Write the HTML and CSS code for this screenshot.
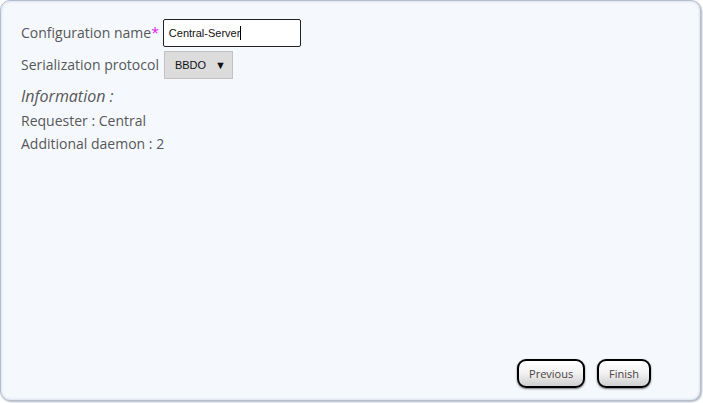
FILE: index.html
```html
<!DOCTYPE html>
<html>
<head>
<meta charset="utf-8">
<link rel="stylesheet" href="styles.css">
</head>
<body>
<div class="panel">
  <div class="form">
    <div class="row">
      <span class="label">Configuration name<span class="req">*</span></span>
      <div class="textbox" role="textbox"><span class="val">Central-Server</span><span class="caret"></span></div>
    </div>
    <div class="row">
      <span class="label">Serialization protocol</span>
      <div class="select" role="listbox"><span class="opt">BBDO</span><span class="arrow">▼</span></div>
    </div>
    <div class="info-title">Information :</div>
    <div class="info-line">Requester : Central</div>
    <div class="info-line">Additional daemon : 2</div>
  </div>
  <div class="actions">
    <button class="btn btn-prev">Previous</button>
    <button class="btn">Finish</button>
  </div>
</div>
</body>
</html>
```
FILE: styles.css
```css
html, body {
  margin: 0;
  padding: 0;
  background: #ffffff;
}
body {
  width: 703px;
  height: 403px;
  font-family: "Open Sans", "Liberation Sans", sans-serif;
}
.panel {
  box-sizing: border-box;
  width: 701px;
  height: 401px;
  background: #f5f9fe;
  border: 1px solid #b3bfcf;
  border-radius: 10px;
  box-shadow: 1px 1px 2px rgba(80, 90, 110, 0.45), inset 0 0 3px rgba(120, 135, 160, 0.35);
  display: flex;
  flex-direction: column;
  padding: 18px 49px 12px 20px;
}
.form {
  display: flex;
  flex-direction: column;
  color: #575757;
  font-size: 14px;
}
.row {
  display: flex;
  align-items: center;
  height: 28px;
  margin-bottom: 4px;
}
.label {
  white-space: nowrap;
  line-height: 20px;
}
.req {
  color: #e020e0;
  margin-right: 4px;
}
.textbox {
  box-sizing: border-box;
  width: 138px;
  height: 28px;
  border: 1px solid #222;
  border-radius: 2px;
  background: #fff;
  display: flex;
  align-items: center;
  padding: 0 5px;
  font-family: "Liberation Sans", Arial, sans-serif;
  font-size: 11px;
  color: #111;
}
.caret {
  width: 1px;
  height: 14px;
  background: #000;
}
.select {
  box-sizing: border-box;
  margin-left: 5px;
  width: 69px;
  height: 28px;
  background: #dcdcdc;
  border: 1px solid #c2c2c2;
  display: flex;
  align-items: center;
  justify-content: space-between;
  padding: 0 6px 0 10px;
  font-family: "Liberation Sans", Arial, sans-serif;
  font-size: 11px;
  color: #111;
}
.arrow {
  font-size: 11px;
}
.info-title {
  font-style: italic;
  font-size: 16px;
  line-height: 24px;
  margin-top: 1px;
  margin-bottom: 1px;
}
.info-line {
  line-height: 23px;
}
.actions {
  margin-top: auto;
  display: flex;
  justify-content: flex-end;
  gap: 12px;
}
.btn {
  box-sizing: border-box;
  height: 29px;
  padding: 0 10px;
  border: 2px solid #000;
  border-radius: 9px;
  background: linear-gradient(#ffffff 0%, #f4f4f4 45%, #cfcfcf 100%);
  box-shadow: 0 1px 2px rgba(0, 0, 0, 0.55);
  font-family: "Open Sans", sans-serif;
  font-size: 11px;
  color: #4a4242;
}
.btn-prev {
  width: 68px;
}
```
